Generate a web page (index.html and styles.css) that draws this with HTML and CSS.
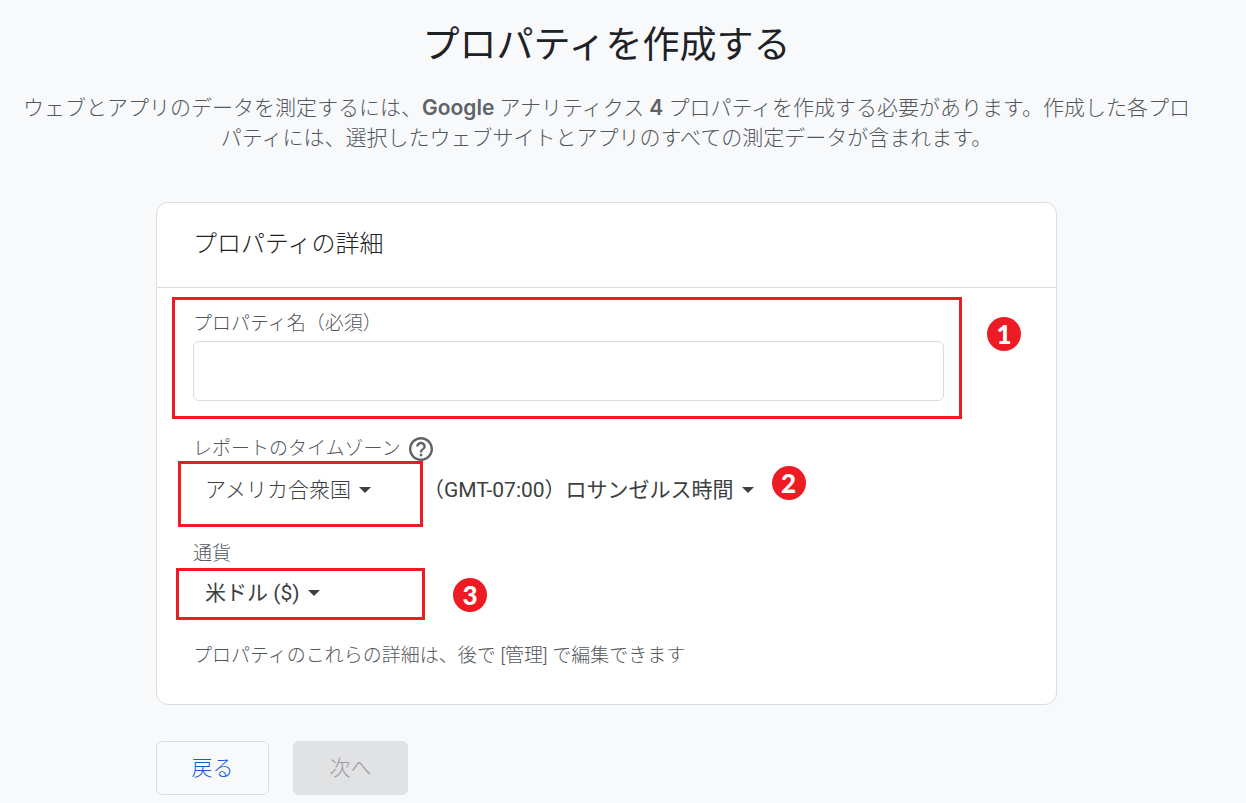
FILE: index.html
```html
<!DOCTYPE html>
<html lang="ja">
<head>
<meta charset="utf-8">
<meta name="viewport" content="width=device-width, initial-scale=1">
<title>プロパティを作成する</title>
<link rel="stylesheet" href="styles.css">
</head>
<body>
<main class="page">
  <h1 class="title">プロパティを作成する</h1>
  <p class="intro">ウェブとアプリのデータを測定するには、<span class="brand">Google</span> アナリティクス <span class="brand">4</span> プロパティを作成する必要があります。作成した各プロパティには、選択したウェブサイトとアプリのすべての測定データが含まれます。</p>

  <form class="form">
    <section class="card">
      <h2 class="card-title">プロパティの詳細</h2>
      <div class="card-body">
        <div class="row">
          <div class="mark mark-name">
            <label class="label" for="name">プロパティ名（必須）</label>
            <input class="text-input" id="name" type="text" required>
          </div>
          <span class="badge badge-name">1</span>
        </div>

        <div class="label-row">
          <label class="label" for="country">レポートのタイムゾーン</label>
          <button class="help" type="button" aria-label="ヘルプ">
            <svg class="help-icon" viewBox="2 2 20 20" aria-hidden="true"><path fill="currentColor" d="M11 18h2v-2h-2v2zm1-16C6.480 2 2 6.480 2 12s4.480 10 10 10 10-4.480 10-10S17.520 2 12 2zm0 18c-4.410 0-8-3.590-8-8s3.590-8 8-8 8 3.590 8 8-3.590 8-8 8zm0-14c-2.210 0-4 1.790-4 4h2c0-1.100.9-2 2-2s2 .9 2 2c0 2-3 1.750-3 5h2c0-2.250 3-2.500 3-5 0-2.210-1.790-4-4-4z"/></svg>
          </button>
        </div>
        <div class="row">
          <div class="mark mark-country">
            <div class="picker">
              <select class="select" id="country"><option>アメリカ合衆国</option></select>
              <svg class="arrow" viewBox="0 0 12 6" aria-hidden="true"><path fill="currentColor" d="M0 0h12L6 6z"/></svg>
            </div>
          </div>
          <div class="picker picker-zone">
            <select class="select select-latin" aria-label="タイムゾーン"><option>（GMT-07:00）ロサンゼルス時間</option></select>
            <svg class="arrow" viewBox="0 0 12 6" aria-hidden="true"><path fill="currentColor" d="M0 0h12L6 6z"/></svg>
          </div>
          <span class="badge badge-zone">2</span>
        </div>

        <div class="label-row label-currency">
          <label class="label" for="currency">通貨</label>
        </div>
        <div class="row">
          <div class="mark mark-currency">
            <div class="picker">
              <select class="select select-latin" id="currency"><option>米ドル ($)</option></select>
              <svg class="arrow" viewBox="0 0 12 6" aria-hidden="true"><path fill="currentColor" d="M0 0h12L6 6z"/></svg>
            </div>
          </div>
          <span class="badge badge-currency">3</span>
        </div>

        <p class="note">プロパティのこれらの詳細は、後で [管理] で編集できます</p>
      </div>
    </section>

    <div class="actions">
      <button class="button" type="button">戻る</button>
      <button class="button button-next" type="submit" disabled>次へ</button>
    </div>
  </form>
</main>
</body>
</html>
```
FILE: styles.css
```css
* {
  box-sizing: border-box;
}

body {
  margin: 0;
  background: #f8f9fb;
  color: #3c4043;
  font-family: Roboto, "Noto Sans CJK JP", sans-serif;
  font-size: 21px;
  font-weight: 300;
  line-height: 30px;
}

.page {
  padding: 22px 52px 8px 19px;
}

.title {
  margin: 0;
  color: #202124;
  font-size: 37px;
  font-weight: 400;
  line-height: 48px;
  text-align: center;
}

.intro {
  margin: 23px 0 49px;
  color: #53575c;
  text-align: center;
}

.brand {
  color: #5f6368;
  font-family: Inter, sans-serif;
  font-weight: 600;
}

.form {
  max-width: 901px;
  margin: 0 auto;
}

.card {
  background: #fff;
  border: 1px solid #dadce0;
  border-radius: 12px;
}

.card-title {
  margin: 0;
  padding: 23px 36px 25px;
  border-bottom: 1px solid #dadce0;
  color: #202124;
  font-size: 24px;
  font-weight: 300;
  line-height: 36px;
}

.card-body {
  padding: 9px 15px 36px;
}

.row {
  display: flex;
  align-items: flex-start;
}

.mark {
  border: 3px solid #ed1c24;
}

.mark-name {
  flex: 0 1 790px;
  display: flex;
  flex-direction: column;
  gap: 5px;
  padding: 12px 15px 15px 18px;
}

.label,
.note {
  color: #53575c;
  font-size: 19px;
  line-height: 24px;
}

.text-input {
  width: 100%;
  height: 60px;
  padding: 0 16px;
  border: 1px solid #dadce0;
  border-radius: 6px;
  background: #fff;
  color: inherit;
  font: inherit;
}

.label-row {
  display: flex;
  align-items: center;
  gap: 8px;
  margin-top: 18px;
  padding-left: 21px;
}

.label-currency {
  margin: 15px 0 2px;
}

.help {
  display: flex;
  padding: 0;
  border: 0;
  background: none;
  color: #5f6368;
}

.help-icon {
  width: 24px;
  height: 24px;
}

.mark-country {
  width: 245px;
  margin-left: 6px;
  padding: 11px 24px 19px;
}

.mark-currency {
  width: 249px;
  margin-left: 4px;
  padding: 7px 26px 9px;
}

.picker {
  display: flex;
  align-items: center;
  gap: 8px;
}

.picker-zone {
  padding-top: 14px;
}

.select {
  appearance: none;
  field-sizing: content;
  height: 30px;
  padding: 0;
  border: 0;
  background: none;
  color: inherit;
  font: inherit;
}

.select-latin {
  font-weight: 400;
}

.arrow {
  flex: none;
  width: 12px;
  height: 6px;
}

.badge {
  flex: none;
  width: 34px;
  height: 34px;
  border-radius: 50%;
  background: #ed1c24;
  color: #fff;
  font-family: Lato, "Noto Sans", sans-serif;
  font-size: 26px;
  font-weight: 900;
  line-height: 34px;
  text-align: center;
}

.badge-name {
  margin: 20px 0 0 25px;
}

.badge-zone {
  margin: 5px 0 0 18px;
}

.badge-currency {
  margin: 10px 0 0 28px;
}

.note {
  margin: 24px 0 0;
  padding-left: 21px;
}

.actions {
  display: flex;
  gap: 24px;
  margin-top: 36px;
}

.button {
  min-width: 113px;
  height: 54px;
  padding: 0 34px;
  border: 1px solid #dadce0;
  border-radius: 6px;
  background: #f8f9fb;
  color: #1a5cd6;
  font: inherit;
}

.button-next {
  min-width: 115px;
  border-color: #e1e2e4;
  background: #e1e2e4;
  color: #9a9c9f;
}
```
